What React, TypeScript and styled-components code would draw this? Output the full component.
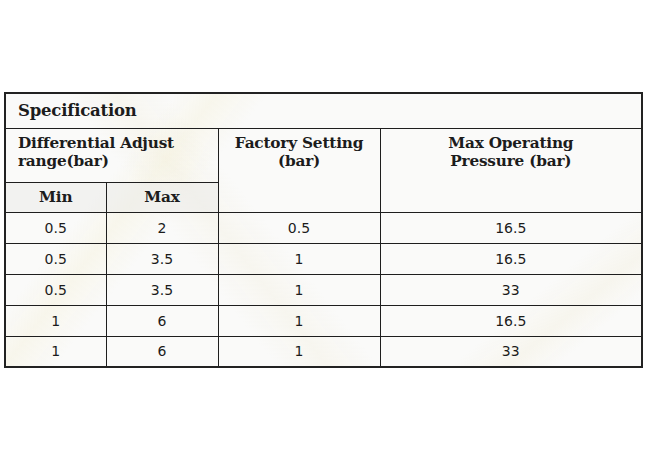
import React from 'react';
import styled, { createGlobalStyle } from 'styled-components';

const GlobalStyle = createGlobalStyle`
  html, body {
    margin: 0;
    padding: 0;
    background: #ffffff;
  }
`;

const Page = styled.div`
  width: 646px;
  height: 460px;
  padding: 92px 5px 0 4px;
  box-sizing: border-box;
`;

const Table = styled.table`
  width: 637px;
  border-collapse: collapse;
  table-layout: fixed;
  border: 2px solid #222;
  background:
    linear-gradient(128deg, transparent 0%, transparent 20%, rgba(240, 232, 190, 0.22) 25%, transparent 31%, transparent 100%),
    linear-gradient(52deg, transparent 0%, transparent 32%, rgba(235, 228, 200, 0.2) 38%, transparent 44%, transparent 100%),
    linear-gradient(140deg, transparent 0%, transparent 80%, rgba(238, 232, 205, 0.25) 86%, transparent 91%),
    #fafaf9;
`;

const Cell = styled.td<{ $align?: 'left' | 'center'; $head?: boolean; $h: number; $shade?: boolean }>`
  border: 1.7px solid #1e1e1e;
  height: ${(p) => p.$h}px;
  padding: ${(p) => (p.$align === 'left' ? '0 6px 0 12px' : '0 4px')};
  box-sizing: border-box;
  text-align: ${(p) => p.$align ?? 'center'};
  vertical-align: ${(p) => (p.$head ? 'top' : 'middle')};
  color: #1c1c1c;
  background: ${(p) => (p.$shade ? 'rgba(234, 234, 232, 0.5)' : 'transparent')};
  font-family: ${(p) =>
    p.$head ? '"DejaVu Serif", "Liberation Serif", serif' : '"DejaVu Sans", sans-serif'};
  font-weight: ${(p) => (p.$head ? 700 : 400)};
  font-size: ${(p) => (p.$head ? '15.3px' : '14px')};
  line-height: ${(p) => (p.$head ? '18px' : '16px')};
  letter-spacing: ${(p) => (p.$head ? '-0.2px' : '0')};
`;

const Title = styled(Cell)`
  font-size: 16.5px;
  vertical-align: middle;
`;

const HeadText = styled.div`
  padding-top: 5px;
`;

const rows = [
  ['0.5', '2', '0.5', '16.5'],
  ['0.5', '3.5', '1', '16.5'],
  ['0.5', '3.5', '1', '33'],
  ['1', '6', '1', '16.5'],
  ['1', '6', '1', '33'],
];

export default function App() {
  return (
    <>
      <GlobalStyle />
      <Page>
        <Table>
          <colgroup>
            <col style={{ width: 101 }} />
            <col style={{ width: 112 }} />
            <col style={{ width: 162 }} />
            <col style={{ width: 262 }} />
          </colgroup>
          <tbody>
            <tr>
              <Title as="th" colSpan={4} $align="left" $head $h={35}>
                Specification
              </Title>
            </tr>
            <tr>
              <Cell as="th" colSpan={2} $align="left" $head $h={54}>
                <HeadText>
                  Differential Adjust
                  <br />
                  range(bar)
                </HeadText>
              </Cell>
              <Cell as="th" rowSpan={2} $head $h={84}>
                <HeadText>
                  Factory Setting
                  <br />
                  (bar)
                </HeadText>
              </Cell>
              <Cell as="th" rowSpan={2} $head $h={84}>
                <HeadText>
                  Max Operating
                  <br />
                  Pressure (bar)
                </HeadText>
              </Cell>
            </tr>
            <tr>
              <Cell as="th" $head $shade $h={30}>
                <HeadText>Min</HeadText>
              </Cell>
              <Cell as="th" $head $shade $h={30}>
                <HeadText>Max</HeadText>
              </Cell>
            </tr>
            {rows.map((r, i) => (
              <tr key={i}>
                {r.map((v, j) => (
                  <Cell key={j} $h={31}>
                    {v}
                  </Cell>
                ))}
              </tr>
            ))}
          </tbody>
        </Table>
      </Page>
    </>
  );
}
